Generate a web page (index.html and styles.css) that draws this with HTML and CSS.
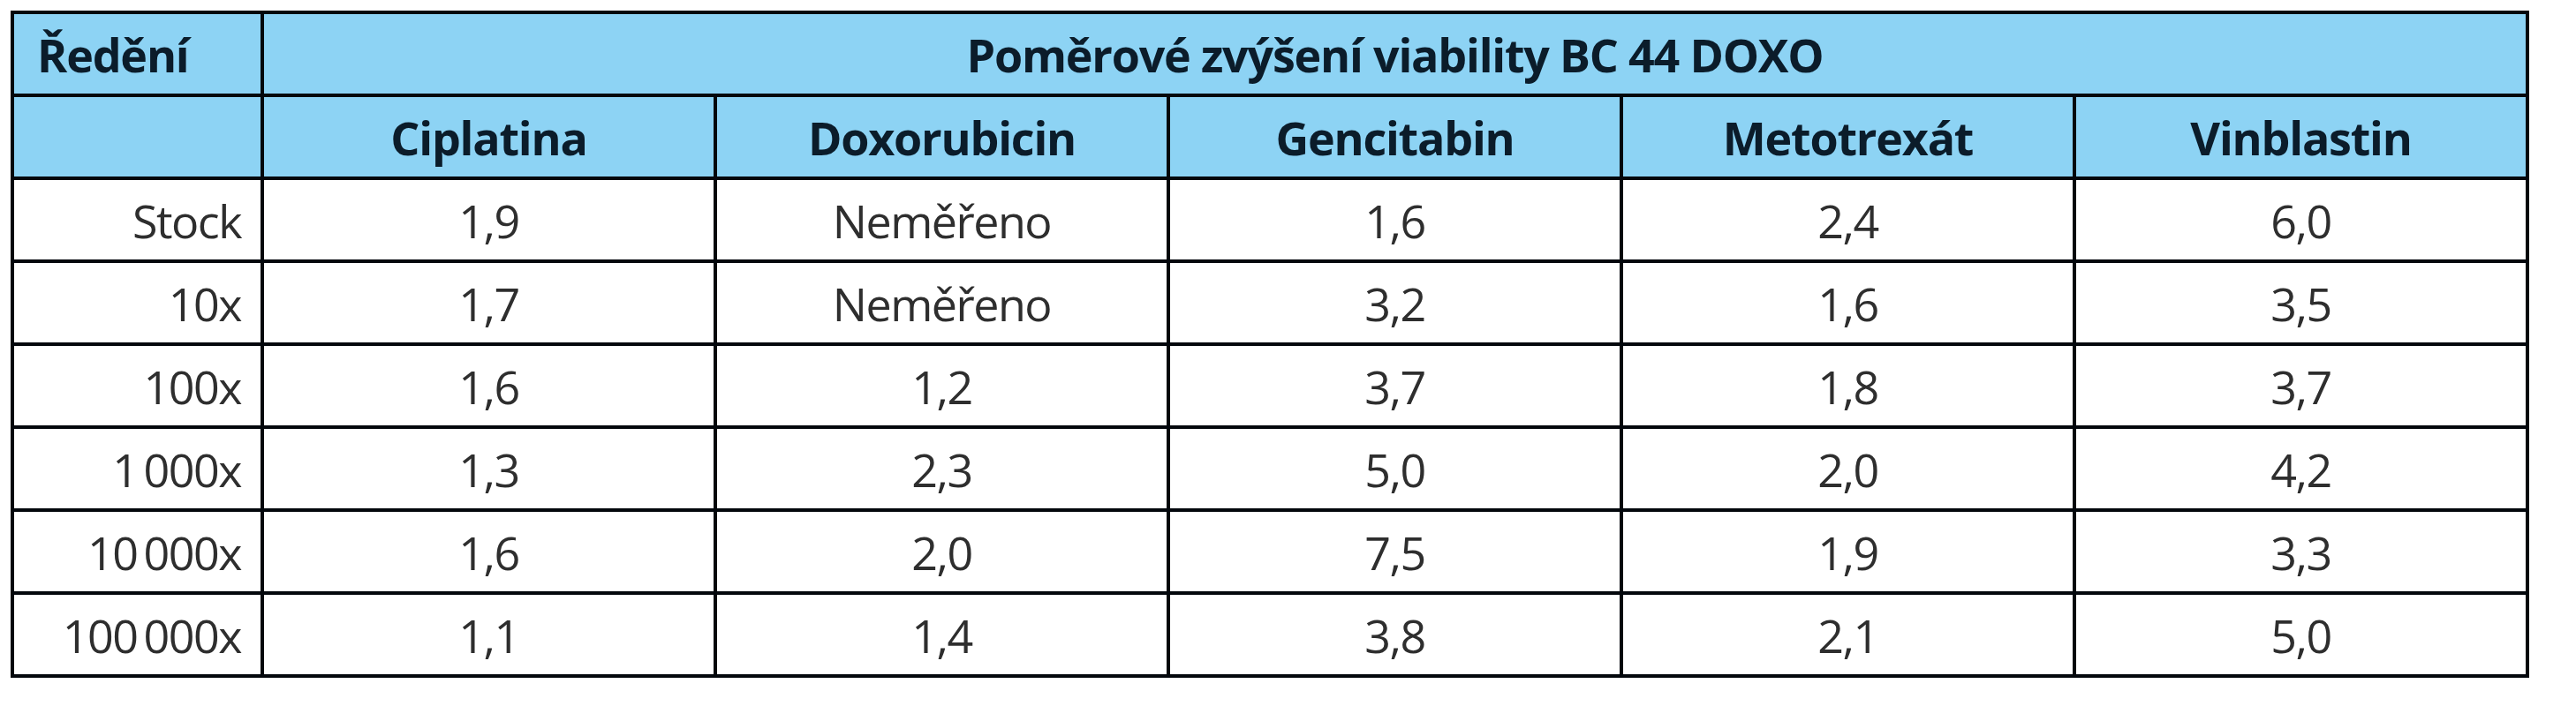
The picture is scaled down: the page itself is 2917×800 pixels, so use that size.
FILE: index.html
```html
<!DOCTYPE html>
<html lang="cs">
<head>
<meta charset="utf-8">
<title>Poměrové zvýšení viability BC 44 DOXO</title>
<link rel="stylesheet" href="styles.css">
</head>
<body>
<table class="data">
  <colgroup>
    <col class="c-first">
    <col class="c-val"><col class="c-val"><col class="c-val"><col class="c-val"><col class="c-val">
  </colgroup>
  <thead>
    <tr>
      <th class="h-left">Ředění</th>
      <th colspan="5">Poměrové zvýšení viability BC 44 DOXO</th>
    </tr>
    <tr>
      <th></th>
      <th>Ciplatina</th>
      <th>Doxorubicin</th>
      <th>Gencitabin</th>
      <th>Metotrexát</th>
      <th>Vinblastin</th>
    </tr>
  </thead>
  <tbody>
    <tr><td class="d-right">Stock</td><td>1,9</td><td>Neměřeno</td><td>1,6</td><td>2,4</td><td>6,0</td></tr>
    <tr><td class="d-right">10x</td><td>1,7</td><td>Neměřeno</td><td>3,2</td><td>1,6</td><td>3,5</td></tr>
    <tr><td class="d-right">100x</td><td>1,6</td><td>1,2</td><td>3,7</td><td>1,8</td><td>3,7</td></tr>
    <tr><td class="d-right">1&#8201;000x</td><td>1,3</td><td>2,3</td><td>5,0</td><td>2,0</td><td>4,2</td></tr>
    <tr><td class="d-right">10&#8201;000x</td><td>1,6</td><td>2,0</td><td>7,5</td><td>1,9</td><td>3,3</td></tr>
    <tr><td class="d-right">100&#8201;000x</td><td>1,1</td><td>1,4</td><td>3,8</td><td>2,1</td><td>5,0</td></tr>
  </tbody>
</table>
</body>
</html>
```

FILE: styles.css
```css
html, body {
  margin: 0;
  padding: 0;
  background: #ffffff;
}

body {
  padding: 12px 0 0 12px;
  font-family: "Open Sans", "Liberation Sans", sans-serif;
}

.data {
  border-collapse: collapse;
  table-layout: fixed;
  width: 2852px;
}

.c-first { width: 283px; }
.c-val { width: 513px; }

.data th,
.data td {
  border: 4px solid #03070c;
  height: 90px;
  padding: 0;
  text-align: center;
  vertical-align: middle;
  white-space: nowrap;
}

.data th {
  background: #8dd3f4;
  color: #0b1c2a;
  font-weight: 700;
  font-size: 52px;
  letter-spacing: -1.2px;
}

.data td {
  background: #ffffff;
  color: #2e2e2e;
  font-weight: 400;
  font-size: 52px;
  letter-spacing: -1.5px;
}

.data .h-left {
  text-align: left;
  padding-left: 26px;
}

.data .d-right {
  text-align: right;
  padding-right: 22px;
}
```
